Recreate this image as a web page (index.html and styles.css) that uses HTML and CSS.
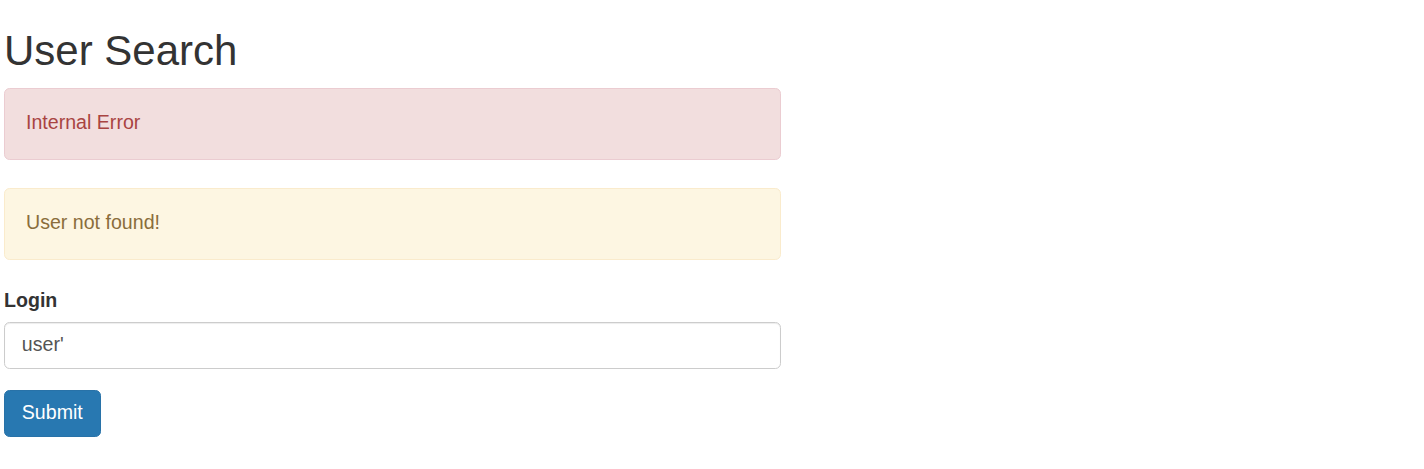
FILE: index.html
```html
<!DOCTYPE html>
<html lang="en">
<head>
<meta charset="utf-8">
<title>User Search</title>
<link rel="stylesheet" href="styles.css">
</head>
<body>
<main class="page">
  <h2 class="title">User Search</h2>
  <div class="alert alert-danger">Internal Error</div>
  <div class="alert alert-warning">User not found!</div>
  <form class="search-form">
    <div class="form-group">
      <label class="label" for="login">Login</label>
      <input class="input" id="login" type="text" value="user'">
    </div>
    <button class="btn" type="button">Submit</button>
  </form>
</main>
</body>
</html>
```
FILE: styles.css
```css
html, body {
  margin: 0;
  padding: 0;
  background: #fff;
}
body {
  font-family: "Liberation Sans", Arial, sans-serif;
  font-size: 19.6px;
  line-height: 28px;
  color: #333;
}
.page {
  width: 777px;
  margin-left: 4px;
}
.title {
  margin: 28px 0 14px;
  font-size: 42px;
  font-weight: 500;
  line-height: 1.1;
  color: #333;
}
.alert {
  padding: 19px 21px 23px;
  margin-bottom: 28px;
  border: 1px solid transparent;
  border-radius: 5.6px;
}
.alert-danger {
  background: #f2dede;
  border-color: #ebccd1;
  color: #a94442;
}
.alert-warning {
  background: #fdf6e2;
  border-color: #faebcc;
  color: #8a6d3b;
}
.search-form {
  margin: 0;
}
.form-group {
  margin-bottom: 21px;
}
.label {
  display: block;
  margin-bottom: 10px;
  font-weight: 700;
  line-height: 24px;
}
.input {
  display: block;
  box-sizing: border-box;
  width: 100%;
  height: 47px;
  padding: 7px 16.8px 9px;
  font-family: inherit;
  font-size: 19.6px;
  line-height: 28px;
  color: #555;
  background: #fff;
  border: 1px solid #ccc;
  border-radius: 5.6px;
  box-shadow: inset 0 1px 1px rgba(0,0,0,.075);
  outline: none;
}
.btn {
  display: inline-block;
  box-sizing: border-box;
  height: 47px;
  padding: 6px 16.8px 10px;
  font-family: inherit;
  font-size: 19.6px;
  line-height: 28px;
  color: #fff;
  background: #2878b1;
  border: 1px solid #2872a8;
  border-radius: 5.6px;
  cursor: pointer;
}
```
